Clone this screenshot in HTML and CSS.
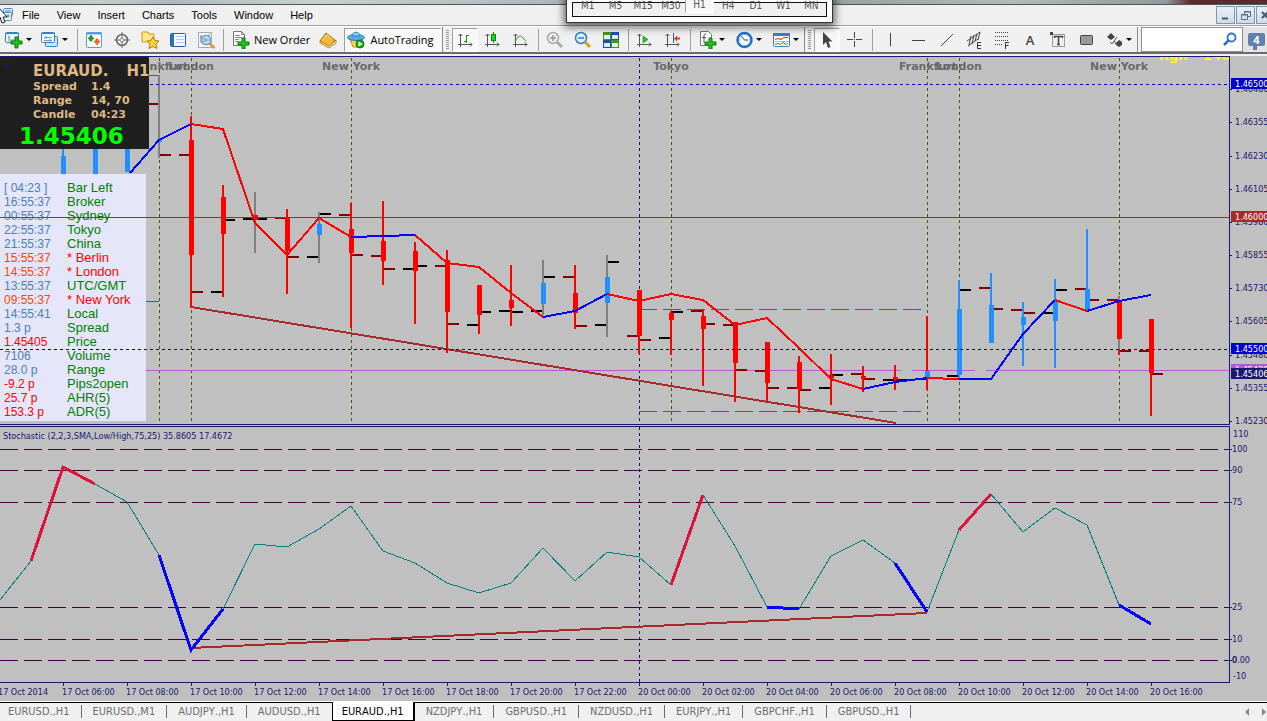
FILE: index.html
```
<!DOCTYPE html>
<html lang="en">
<head>
<meta charset="utf-8">
<title>EURAUD.,H1</title>
<link rel="stylesheet" href="styles.css">
</head>
<body>
<div class="app">
  <div class="titlebar"></div>
  <header class="menubar">
    <svg class="app-icon" width="16" height="18" viewBox="0 0 16 18" aria-hidden="true">
      <rect x="3.5" y="2.5" width="9" height="7" rx="1" fill="#dcebf8" stroke="#4a86c8"/>
      <rect x="0.5" y="6.5" width="11" height="8" rx="1" fill="#eef6fd" stroke="#4a86c8"/>
      <path d="M5 10h5M8 8v4M5 5h6" stroke="#4a86c8" fill="none"/>
      <path d="M-3 0V2L-3 14L0 11L2 17L5 16L3 11H7L-1 2Z" fill="#fff" stroke="#222"/>
    </svg>
    <nav class="menus">
      <button>File</button><button>View</button><button>Insert</button><button>Charts</button><button>Tools</button><button>Window</button><button>Help</button>
    </nav>
    <div class="mdi">
      <button aria-label="Minimize"><svg width="17" height="16"><path d="M5 11.500h6" stroke="#44566c" stroke-width="2"/></svg></button>
      <button aria-label="Restore"><svg width="17" height="16"><path d="M7.500 7V4.500h6v5H11M7 5h7M4.500 7.500h6v5h-6zM4 8h7" fill="none" stroke="#5c6e84"/></svg></button>
      <button aria-label="Close"><svg width="17" height="16"><path d="M5 5l6 6M11 5l-6 6" stroke="#44566c" stroke-width="2"/></svg></button>
    </div>
  </header>

  <div class="toolbar">
    <div class="group">
      <button class="tool drop" aria-label="New chart"><svg width="18" height="18"><rect x="0.5" y="1.500" width="13" height="10" rx="1" fill="#eaf4fc" stroke="#3b7fc4"/><path d="M0 2.500h14" stroke="#3b7fc4"/><path d="M4 5v5M3 6h2M4 9h6" stroke="#6d9cc8" fill="none"/><path d="M10 6h3v4h4v3h-4v4h-3v-4H6v-3h4z" fill="#1fc41f" stroke="#067a06"/></svg><i></i></button>
      <button class="tool drop" aria-label="Profiles"><svg width="18" height="18"><rect x="4.500" y="5.500" width="12" height="10" rx="1" fill="#cfe4f6" stroke="#3b7fc4"/><rect x="0.5" y="1.500" width="13" height="10" rx="1" fill="#f4faff" stroke="#3b7fc4"/><path d="M0 2.500h14" stroke="#3b7fc4"/><path d="M3 6.500h8M3 9.500h8M5 5v3M9 8v3" stroke="#6d9cc8"/></svg><i></i></button>
      <span class="sep"></span>
      <button class="tool" aria-label="Market Watch"><svg width="18" height="18"><rect x="1.500" y="1.500" width="15" height="15" rx="1" fill="#fff" stroke="#5a9ad6"/><path d="M1 2.500h16" stroke="#5a9ad6" stroke-width="2"/><path d="M6 4l3 4H7v2H5V8H3z" fill="#18a818" stroke="#0a6e0a" stroke-width=".6"/><path d="M12 14l3-4h-2V8h-2v2H9z" fill="#ff6a2a" stroke="#c23a08" stroke-width=".6"/></svg></button>
      <button class="tool" aria-label="Crosshair target"><svg width="18" height="18"><circle cx="9" cy="9" r="5.500" fill="none" stroke="#666" stroke-width="1.500"/><path d="M9 1v16M1 9h16" stroke="#666"/><circle cx="9" cy="9" r="2" fill="#eee" stroke="#888"/></svg></button>
      <button class="tool" aria-label="Navigator"><svg width="18" height="18"><path d="M1 3V1h6l1 2h5v8H1z" fill="#ffe78a" stroke="#c99a1e"/><path d="M12 6l2 3.500 4 .5-3 3 1 4.500-4-2-4 2 1-4.500-3-3 4-.5z" fill="#ffd23c" stroke="#b27a0c"/></svg></button>
      <button class="tool" aria-label="Data Window"><svg width="18" height="18"><rect x="1.500" y="2.500" width="15" height="13" rx="1" fill="#f2f9ff" stroke="#1f5fa8"/><rect x="2" y="3" width="3" height="12" fill="#2c6fba"/><path d="M7 5.500h8M7 8.500h8M7 11.500h8" stroke="#a8cbea"/></svg></button>
      <button class="tool" aria-label="Strategy Tester"><svg width="18" height="18"><rect x="1.500" y="1.500" width="13" height="15" fill="#f3f3f3" stroke="#aaa"/><path d="M4 4v8M12 3v8M3 6h3" stroke="#888"/><circle cx="9" cy="9" r="4.500" fill="#cfe6f8" stroke="#6d9fcc" stroke-width="1.500"/><path d="M7 7v4M9 7v4M11 8v2" stroke="#5a8ab5"/><path d="M12.500 12.500l5 4.500" stroke="#d69a28" stroke-width="2.500"/></svg></button>
      <span class="sep"></span>
      <button class="tool order"><svg width="18" height="18"><path d="M1.500 0.500h8l3 3v11h-11z" fill="#fff" stroke="#777"/><path d="M9.500 .5v3h3M3 4.500h5M3 6.500h7M3 8.500h4M3 10.500h3" stroke="#888" fill="none"/><path d="M10 7h3v4h4v3h-4v4h-3v-4H6v-3h4z" fill="#1fc41f" stroke="#067a06"/></svg>New Order</button>
      <button class="tool" aria-label="MetaEditor"><svg width="18" height="18"><path d="M1 10l6-8 9 7-6 7z" fill="#f0b93c" stroke="#a66f10"/><path d="M1 10l9 5 7-6v3l-7 5-9-5z" fill="#ffe6a0" stroke="#a66f10" stroke-width=".8"/><path d="M4 9l4-5 5 4" stroke="#ffe08a" fill="none"/></svg></button>
      <button class="tool auto"><svg width="18" height="18"><path d="M3 8h12l-3 8H6z" fill="#ffd65a" stroke="#c08a1a"/><ellipse cx="9" cy="6.500" rx="8.500" ry="3" fill="#58aee2" stroke="#2f7eb5"/><path d="M5 5c0-5 8-5 8 0z" fill="#8dcdf2" stroke="#2f7eb5"/><circle cx="13" cy="13" r="4" fill="#19b219" stroke="#0a7a0a"/><path d="M11.500 10.500l4 2.500-4 2.500z" fill="#fff"/></svg>AutoTrading</button>
    </div>
    <div class="group">
      <span class="grip"></span>
      <button class="tool pressed" aria-label="Bar chart"><svg width="18" height="18"><path d="M4.500 3v13M2 13.500h14M2.500 5l2-2 2 2M14 11.500l2 2-2 2" stroke="#555" fill="none"/><path d="M10.500 4v8M10 4.500h3M8 10.500h3" stroke="#128a12"/></svg></button>
      <button class="tool" aria-label="Candlesticks"><svg width="18" height="18"><path d="M3.500 3v13M1 13.500h14M1.500 5l2-2 2 2M13 11.500l2 2-2 2" stroke="#555" fill="none"/><path d="M9.500 1v11" stroke="#128a12"/><rect x="7.500" y="3.500" width="4" height="6" fill="#23d323" stroke="#128a12"/></svg></button>
      <button class="tool" aria-label="Line chart"><svg width="18" height="18"><path d="M3.500 3v13M1 13.500h14M1.500 5l2-2 2 2M13 11.500l2 2-2 2" stroke="#555" fill="none"/><path d="M3 11C6 4 9 4 11 7l3 3" stroke="#2a9a2a" fill="none"/></svg></button>
      <span class="sep"></span>
      <button class="tool" aria-label="Zoom in"><svg width="18" height="18"><circle cx="7" cy="7" r="5.500" fill="#eee" stroke="#aaa" stroke-width="1.500"/><path d="M4 7h6M7 4v6" stroke="#999" stroke-width="1.500"/><path d="M11 11l5 5" stroke="#aaa" stroke-width="3"/></svg></button>
      <button class="tool" aria-label="Zoom out"><svg width="18" height="18"><circle cx="7" cy="7" r="5.500" fill="#dff1fd" stroke="#2f7fc4" stroke-width="1.500"/><path d="M4 7h6" stroke="#2f7fc4" stroke-width="1.500"/><path d="M11 11l5 5" stroke="#d69a28" stroke-width="3"/></svg></button>
      <button class="tool" aria-label="Tile windows"><svg width="18" height="18"><path d="M1 1h8v8H1zM9 9h8v8H9z" fill="#3f9a1c"/><path d="M9 1h8v8H9zM1 9h8v8H1z" fill="#1d4fb4"/><path d="M2 4h6v4H2zM10 12h6v4h-6z" fill="#dff5d2"/><path d="M10 4h6v4h-6zM2 12h6v4H2z" fill="#d5e4fb"/><path d="M3 5.500h4M11 5.500h4M3 13.500h4M11 13.500h4" stroke="#fff"/></svg></button>
      <span class="sep"></span>
      <button class="tool" aria-label="Auto scroll"><svg width="18" height="18"><path d="M3.500 3v13M1 13.500h14M1.500 5l2-2 2 2M13 11.500l2 2-2 2" stroke="#555" fill="none"/><path d="M7 5l5 3.500-5 3.500z" fill="#23c323" stroke="#128a12" stroke-width=".6"/></svg></button>
      <button class="tool" aria-label="Chart shift"><svg width="18" height="18"><path d="M3.500 3v13M1 13.500h14M1.500 5l2-2 2 2M13 11.500l2 2-2 2" stroke="#555" fill="none"/><path d="M9.500 2v10" stroke="#1f5fa8"/><path d="M10 7.500l3-3v2h3v2h-3v2z" fill="#d5421c"/></svg></button>
      <span class="sep"></span>
      <button class="tool drop wide" aria-label="Indicators"><svg width="18" height="18"><path d="M1.500 .5h8l3 3v11h-11z" fill="#fff" stroke="#777"/><path d="M7 3C5 3 5 4 5 6v6M3 6.500h4" stroke="#555" fill="none"/><path d="M10 7h3v4h4v3h-4v4h-3v-4H6v-3h4z" fill="#1fc41f" stroke="#067a06"/></svg><i></i></button>
      <button class="tool drop wide" aria-label="Periods"><svg width="18" height="18"><circle cx="8.500" cy="9" r="7" fill="#f4faff" stroke="#1e73c8" stroke-width="2.500"/><path d="M5 5l3.500 4H12" stroke="#444" fill="none"/><path d="M8.500 3v1M8.500 14v1M3 9h1M13 9h1" stroke="#888"/></svg><i></i></button>
      <button class="tool drop wide" aria-label="Templates"><svg width="18" height="18"><rect x=".5" y="2.500" width="16" height="13" rx="1" fill="#fff" stroke="#3b7fc4"/><path d="M0 3.500h17" stroke="#3b7fc4" stroke-width="3"/><path d="M2 8.500l3-1 3 1 3-2h4" stroke="#b2341c" fill="none"/><path d="M2 10.500h14" stroke="#bbb"/><path d="M2 13.500l3-1 2 1 3-2 3 2 2-1" stroke="#1d9a1d" fill="none"/></svg><i></i></button>
    </div>
    <div class="group last-group">
      <span class="grip"></span>
      <button class="tool pressed" aria-label="Cursor"><svg width="18" height="18"><path d="M5 1v13l3-3 2 6 2.500-1-2-5.500h4z" fill="#444"/></svg></button>
      <button class="tool" aria-label="Crosshair"><svg width="18" height="18" shape-rendering="crispEdges"><path d="M8.500 1v6M8.500 10v6M1 8.500h6M10 8.500h6M8 8.500h1" stroke="#444"/></svg></button>
      <span class="sep"></span>
      <button class="tool" aria-label="Vertical line"><svg width="18" height="18" shape-rendering="crispEdges"><path d="M9.500 2v13" stroke="#444"/></svg></button>
      <button class="tool" aria-label="Horizontal line"><svg width="18" height="18" shape-rendering="crispEdges"><path d="M3 9.500h13" stroke="#444"/></svg></button>
      <button class="tool" aria-label="Trendline"><svg width="18" height="18"><path d="M4 15L16 3" stroke="#444"/></svg></button>
      <button class="tool" aria-label="Equidistant channel"><svg width="18" height="18"><path d="M2 10L15 1M3 15L13 8M6 5l-2 9M9 4l-2 9M12 3l-2 7M15 1l-2 8" stroke="#444" fill="none"/><path d="M16 11.500h-3.500v6H16M12.500 14.500H16" stroke="#333" fill="none"/></svg></button>
      <button class="tool" aria-label="Fibonacci retracement"><svg width="18" height="18"><path d="M2 1.500h14M2 5.500h14M2 9.500h14M2 13.500h8" stroke="#444" stroke-dasharray="1 1"/><path d="M12.500 18v-6.500H16M12.500 14.500h3" stroke="#333" fill="none"/></svg></button>
      <button class="tool letter">A</button>
      <button class="tool" aria-label="Text label"><svg width="18" height="18"><rect x="3.500" y="3.500" width="12" height="12" fill="none" stroke="#444" stroke-dasharray="1 1"/><path d="M5.500 7V5.500h8V7M9.500 5v9M8 13.500h3" stroke="#444" stroke-width="1.500" fill="none"/><path d="M1 1h3v3H1z" fill="#444"/></svg></button>
      <button class="tool" aria-label="Rectangle"><svg width="18" height="18"><rect x="3.500" y="4.500" width="12" height="9" rx="1" fill="#999" stroke="#444"/></svg></button>
      <button class="tool drop wide" aria-label="Arrows"><svg width="18" height="18"><path d="M5 2l4 4-4 3-4-3zM13 9l3 2v3l-3 2-4-3z" fill="#444"/><path d="M4 11l2 2 5-7M8 10l4 5" stroke="#555" fill="none"/></svg><i></i></button>
    </div>
    <div class="search">
      <input type="text" aria-label="Search">
      <svg width="16" height="16"><circle cx="9.500" cy="5.500" r="4" fill="#fff" stroke="#2f6fd0" stroke-width="1.800"/><path d="M6.500 8.500L2 13" stroke="#2f6fd0" stroke-width="2.500"/></svg>
    </div>
    <button class="bubble"><span>4</span></button>
  </div>

  <main class="chart">
    <section class="pane price">
      <svg class="plot" id="price"></svg>
      <div class="quote">
        <span class="corner"></span>
        <div class="symbol"><span>EURAUD.</span><span>H1</span></div>
        <div class="stat"><span>Spread</span><span>1.4</span></div>
        <div class="stat"><span>Range</span><span>14, 70</span></div>
        <div class="stat"><span>Candle</span><span>04:23</span></div>
        <div class="last">1.45406</div>
      </div>
      <table class="clocks">
        <tr><td>[ 04:23 ]</td><th>Bar Left</th></tr>
        <tr><td>16:55:37</td><th>Broker</th></tr>
        <tr><td>00:55:37</td><th>Sydney</th></tr>
        <tr><td>22:55:37</td><th>Tokyo</th></tr>
        <tr><td>21:55:37</td><th>China</th></tr>
        <tr class="open"><td>15:55:37</td><th>* Berlin</th></tr>
        <tr class="open"><td>14:55:37</td><th>* London</th></tr>
        <tr><td>13:55:37</td><th>UTC/GMT</th></tr>
        <tr class="open"><td>09:55:37</td><th>* New York</th></tr>
        <tr><td>14:55:41</td><th>Local</th></tr>
        <tr><td>1.3 p</td><th>Spread</th></tr>
        <tr class="alert"><td>1.45405</td><th>Price</th></tr>
        <tr><td>7106</td><th>Volume</th></tr>
        <tr><td>28.0 p</td><th>Range</th></tr>
        <tr class="alert"><td>-9.2 p</td><th>Pips2open</th></tr>
        <tr class="alert"><td>25.7 p</td><th>AHR(5)</th></tr>
        <tr class="alert"><td>153.3 p</td><th>ADR(5)</th></tr>
      </table>
      <svg class="plot levels" id="levels"></svg>
    </section>
    <svg class="axis" id="price-axis"></svg>
    <section class="pane stoch">
      <svg class="plot" id="stoch"></svg>
    </section>
    <svg class="axis" id="stoch-axis"></svg>
    <svg class="times" id="times"></svg>
  </main>

  <footer class="tabs">
    <button>EURUSD.,H1</button><button>EURUSD.,M1</button><button>AUDJPY.,H1</button><button>AUDUSD.,H1</button><button class="active">EURAUD.,H1</button><button>NZDJPY.,H1</button><button>GBPUSD.,H1</button><button>NZDUSD.,H1</button><button>EURJPY.,H1</button><button>GBPCHF.,H1</button><button>GBPUSD.,H1</button>
    <span class="scroll"><svg width="26" height="10"><path d="M8 1v8L4 5zM21 1v8l4-4z" fill="#888"/></svg></span>
  </footer>

  <div class="periods">
    <button>M1</button><button>M5</button><button>M15</button><button>M30</button><button class="on">H1</button><button>H4</button><button>D1</button><button>W1</button><button>MN</button>
  </div>
</div>
<script src="chart.js"></script>
</body>
</html>
```
FILE: styles.css
```
* { box-sizing: border-box; }
body { margin: 0; background: #f0f0f0; font-family: "Open Sans", sans-serif; font-size: 11px; }
button { border: 0; margin: 0; padding: 0; background: none; font: inherit; color: #000; }
svg { display: block; flex: none; overflow: hidden; }
.app { position: relative; display: flex; flex-direction: column; height: 100vh; overflow: hidden; }

.titlebar { height: 5px; flex: none; border-bottom: 1px solid #50565a; background: linear-gradient(90deg, #b4bcbc, #c2cccb 8%, #aeb9bd 13%, #c8cfce 25%, #b0b9bd 42%, #8c9699 60%, #b3b9b6 80%, #8f9a9c 92%, #5c2a2c 94%); }
.menubar { flex: none; display: flex; align-items: center; height: 21px; border-bottom: 1px solid #a0a0a0; background: #f0f0f0; }
.app-icon { margin-right: 6px; }
.menus { display: flex; gap: 17px; flex: 1; font-family: "Liberation Sans", sans-serif; }
.mdi { display: flex; gap: 1px; width: 51px; overflow: hidden; }
.mdi button { flex: none; width: 19px; height: 18px; border: 1px solid #7f96b0; background: linear-gradient(#eaf1f7, #cddae6); }

.toolbar { flex: none; display: flex; height: 28px; border-top: 1px solid #fff; border-bottom: 2px solid #6b6b6b; background: #f0f0f0; }
.group { flex: none; display: flex; align-items: center; border-right: 1px solid #8d8d8d; }
.group:first-child { padding-left: 2px; }
.last-group .sep { width: 7px; }
.tool { flex: none; display: flex; align-items: center; justify-content: center; width: 28px; height: 24px; white-space: nowrap; }
.drop { width: 36px; gap: 3px; justify-content: flex-start; padding-left: 3px; }
.wide { width: 37px; padding-left: 6px; gap: 2px; }
.drop i { border: 3px solid transparent; border-top-color: #000; border-bottom: 0; }
.order { width: 88px; gap: 4px; justify-content: flex-start; padding-left: 6px; }
.auto { width: 97px; gap: 5px; margin: 0 1px 0 2px; padding-right: 4px; }
.auto, .pressed { border: 1px solid #fff; border-top-color: #a0a0a0; border-left-color: #a0a0a0; background: #f8f8f8; }
.pressed { width: 26px; margin: 0 1px; }
.letter { font-size: 13px; font-weight: 600; color: #444; }
.sep { width: 6px; height: 22px; background: linear-gradient(#a0a0a0, #a0a0a0) 3px 0 / 1px 100% no-repeat; }
.grip { width: 8px; height: 20px; background: repeating-linear-gradient(#999 0 1px, #f0f0f0 1px 2px) 3px 0 / 3px 100% no-repeat; }
.search { flex: 1; min-width: 0; display: flex; align-items: center; margin-left: 3px; padding-right: 4px; border: 1px solid #8d8d8d; background: #fff; }
.search input { flex: 1; width: 0; min-width: 0; height: 20px; padding: 0; border: 0; background: none; }
.bubble { flex: none; width: 24px; padding: 0 2px 0 5px; background: #e4e4e4; }
.bubble span { position: relative; display: block; height: 13px; line-height: 13px; border-radius: 2px; background: #6280ae; color: #fff; font-weight: 700; }
.bubble span::after { content: ""; position: absolute; left: 5px; top: 13px; border: 4px solid transparent; border-top-color: #6280ae; border-right-color: #6280ae; border-bottom: 0; border-left: 0; }

.chart { flex: 1; min-height: 0; display: grid; grid-template: 370px 257px 1fr / 1fr 37px; margin-top: 2px; background: #c0c0c0; font-family: "DejaVu Sans Condensed", "DejaVu Sans", sans-serif; font-size: 9px; font-kerning: none; }
.pane { position: relative; min-width: 0; overflow: hidden; border: solid #191970; border-width: 1px 1px 1px 0; }
.price { margin-bottom: 1px; }
.plot { width: 100%; height: 100%; }
.levels { position: absolute; inset: 0; pointer-events: none; }
.axis, .times { width: 100%; height: 100%; }
.times { grid-column: 1 / 3; }
.session { font: bold 11px "DejaVu Sans", sans-serif; fill: #696969; text-anchor: middle; }
.notice { font: bold 13px "DejaVu Sans", sans-serif; fill: #ff0; }
.ink { fill: #191970; }
.lit { fill: #fff; }

.quote { position: absolute; top: 0; left: 0; width: 149px; height: 92px; padding: 6px 0 0 33px; overflow: hidden; background: #1f1f1f; color: #deb887; font: bold 11px/14px "DejaVu Sans", sans-serif; }
.quote .symbol { display: flex; gap: 18px; font-size: 15px; line-height: 17px; }
.stat { display: flex; }
.stat span:first-child { width: 58px; }
.last { margin-left: -14px; font-size: 23px; line-height: 28px; color: #0f0; }
.corner { position: absolute; left: 2px; top: 6px; border: 4px solid transparent; border-top-color: #191970; border-bottom: 0; }

.clocks { position: absolute; top: 117px; left: 0; width: 146px; padding: 7px 0 2px 4px; border-spacing: 0; table-layout: fixed; background: #e6e6fa; font: 12px/14px "Liberation Sans", sans-serif; }
.clocks tr { height: 14px; }
.clocks td, .clocks th { padding: 0; color: #4682b4; white-space: nowrap; }
.clocks td { width: 63px; }
.clocks th { font-weight: normal; font-size: 13px; text-align: left; color: #008000; }
.clocks .open td { color: #ff4500; }
.clocks .open th, .clocks .alert td { color: #f00; }

.tabs { flex: none; display: flex; align-items: center; height: 20px; border-top: 1px solid #fff; background: linear-gradient(#000, #000) 0 0 / 100% 1px no-repeat #f0f0f0; font-family: "DejaVu Sans Condensed", "DejaVu Sans", sans-serif; font-kerning: none; }
.tabs button { padding: 0 11px; line-height: 13px; color: #6d6d6d; border-right: 1px solid #6d6d6d; white-space: nowrap; }
.tabs button:first-child { padding-left: 8px; }
.tabs button:nth-child(4) { border-right: 0; }
.tabs .active { align-self: stretch; padding: 0 9px; border: solid #000; border-width: 0 2px 1px 1px; background: #fff; color: #000; }
.scroll { margin-left: auto; }

.periods { position: absolute; top: -4px; left: 566px; display: flex; width: 267px; height: 27px; padding: 0 7px; border: 1px solid #333; background: #f0f0f0; box-shadow: 0 2px 8px 2px rgba(0, 0, 0, .6), inset 0 0 0 5px #fff, inset 0 0 0 6px #111; font: 10px "DejaVu Sans Condensed", "DejaVu Sans", sans-serif; }
.periods button { flex: 1 1 0; height: 16px; color: #555; }
.periods .on { border: 1px solid #fff; border-top: 0; border-left-color: #a0a0a0; background: #f8f8f8; }
```
FILE: chart.js
```
const R = '#ff0000', B = '#1e90ff', G = '#808080', K = '#000000', D = '#800000';
// x, wick colour, wick top, wick bottom, body colour, body top, body bottom, open, close, tick colours
const candles = [
  [63, B, 140, 174, B, 156, 176, 0, 0], [95, B, 140, 174, B, 149, 176, 0, 0], [127, B, 140, 172, B, 149, 172, 0, 0],
  [159, G, 75, 158, B, 139, 142, 104, 155, D, D], [191, R, 116, 308, R, 140, 255, 155, 292, D, D],
  [223, R, 185, 297, R, 197, 234, 292, 220, K, K], [255, G, 192, 253, R, 215, 220, 219, 219, K, K],
  [287, R, 209, 294, R, 217, 251, 218, 257, D, D], [319, G, 212, 263, B, 224, 235, 257, 214, K, K],
  [351, R, 203, 328, R, 229, 253, 215, 255, D, D], [383, R, 201, 285, R, 241, 261, 256, 269, D, D],
  [415, R, 242, 324, R, 251, 271, 269, 266, K, K], [447, R, 250, 353, R, 260, 312, 266, 324, D, D],
  [479, R, 285, 334, R, 285, 315, 325, 312, K, K], [511, R, 265, 326, R, 300, 308, 311, 312, K, K],
  [543, G, 260, 315, B, 283, 304, 311, 277, K, K], [575, R, 265, 329, R, 293, 313, 277, 326, D, D],
  [607, G, 255, 337, B, 277, 303, 325, 262, K, K], [639, R, 290, 354, R, 290, 336, 336, 340, D, D],
  [671, R, 311, 355, R, 313, 320, 338, 312, K, K], [703, R, 309, 386, R, 316, 329, 311, 324, D, D],
  [735, R, 322, 402, R, 322, 363, 325, 370, D, D], [767, R, 342, 402, R, 342, 383, 371, 388, D, D],
  [799, R, 356, 413, R, 362, 389, 388, 390, D, D], [831, R, 354, 405, R, 375, 378, 388, 375, K, K],
  [863, R, 366, 392, R, 376, 379, 374, 379, D, D], [895, R, 365, 390, R, 377, 380, 380, 380, K, K],
  [927, R, 316, 390, B, 371, 379, 379, 0, K, K], [959, B, 280, 379, B, 309, 375, 376, 290, K, K],
  [991, B, 273, 343, B, 305, 343, 288, 309, D, D], [1023, B, 302, 366, B, 317, 325, 310, 313, D, D],
  [1055, B, 279, 368, B, 300, 321, 313, 290, K, K], [1087, B, 229, 311, B, 289, 311, 289, 300, D, D],
  [1119, G, 296, 349, R, 300, 339, 300, 351, D, D], [1151, R, 319, 416, R, 319, 373, 351, 374, D, D]
];
const line = (x1, y1, x2, y2, color, extra = '') =>
  `<line x1="${x1}" y1="${y1}" x2="${x2}" y2="${y2}" stroke="${color}" ${extra}/>`;
const rect = (x, y, w, h, color) => `<rect x="${x}" y="${y}" width="${w}" height="${h}" fill="${color}"/>`;
const poly = (points, color, width) =>
  `<polyline points="${points}" fill="none" stroke="${color}" stroke-width="${width}"/>`;
const text = (x, y, label, cls) => `<text x="${x}" y="${y}" class="${cls}">${label}</text>`;
const draw = (id, top, body) => {
  document.getElementById(id).innerHTML = `<g shape-rendering="crispEdges" transform="translate(0 ${-top})">${body}</g>`;
};
const dash = n => `stroke-dasharray="${n}"`;

let s = [159, 191, 351, 671, 927, 959, 1119].map(x => line(x + .5, 58, x + .5, 424, '#555500', dash('3 3'))).join('');
s += line(639.5, 58, 639.5, 424, '#191970', dash('3 3'));
s += line(146, 75.5, 159, 75.5, '#008080') + line(146, 301.5, 159, 301.5, '#008080');
s += line(639, 309.5, 921, 309.5, '#008080', dash('18 6')) + line(639, 411.5, 921, 411.5, '#008080', dash('18 6'));
s += line(146, 370.5, 901, 370.5, '#ba55d3') + line(912, 370.5, 975, 370.5, '#ba55d3') + line(986, 370.5, '100%', 370.5, '#ba55d3');
for (const [x, wc, t, b, bc, bt, bb, o, c, oc, cc] of candles) {
  if (o) s += rect(x - 12, o - 1, 11, 2, oc);
  if (c) s += rect(x + 1, c - 1, 11, 2, cc);
  s += rect(x - 1, t, 2, b - t, wc) + rect(x - 2, bt, 5, bb - bt, bc);
}
s += rect(1118, 349, 2, 6, R);
s += poly('130,173 159,140 191,124', '#0000ff', 2);
s += poly('191,124 223,129 255,223 287,255 319,218 351,237', R, 2);
s += poly('351,237 383,236 415,235', '#0000ff', 2);
s += poly('415,235 447,263 479,267 511,293 543,317', R, 2);
s += poly('543,317 575,311 607,294', '#0000ff', 2);
s += poly('607,294 639,301 671,294 703,300 735,325 767,318 799,348 831,379 863,389', R, 2);
s += poly('863,389 895,382 927,378', '#0000ff', 2) + poly('927,378 959,379', R, 2);
s += poly('959,379 991,379 1023,334 1055,300', '#0000ff', 2) + poly('1055,300 1087,311', R, 2);
s += poly('1087,311 1119,301 1151,295', '#0000ff', 2) + poly('191,307 896,423', '#a52a2a', 2);
for (const [x, name] of [[159, 'Frankfurt'], [191, 'London'], [351, 'New York'], [671, 'Tokyo'], [928, 'Frankfurt'], [959, 'London'], [1119, 'New York']])
  s += text(x, 70, name, 'session');
s += text(1159, 60, 'Rgn', 'notice') + text(1203, 60, '146', 'notice');
draw('price', 57, s);

draw('levels', 57, line(150, 84.5, '100%', 84.5, '#0000cd', dash('3 3')) + line(0, 217.5, '100%', 217.5, '#a52a2a')
  + line(0, 349.5, '100%', 349.5, '#00009c', dash('3 3')));

let a = '';
for (const [y, label] of [[89, '1.46480'], [122, '1.46355'], [156, '1.46230'], [189, '1.46105'], [222, '1.45980'], [255, '1.45855'],
  [288, '1.45730'], [321, '1.45605'], [355, '1.45480'], [388, '1.45355'], [421, '1.45230']])
  a += line(0, y + .5, 2, y + .5, '#191970') + text(5, y + 3, label, 'ink');
for (const [y, h, label, color] of [[78, 11, '1.46500', '#0000cd'], [211, 11, '1.46000', '#a52a2a'], [343, 11, '1.45500', '#0000cd'],
  [364, 11, '1.45420', '#ba55d3'], [368, 11, '1.45406', '#191970']])
  a += rect(1, y, '100%', h, color) + text(5, y + 9, label, 'lit');
draw('price-axis', 56, a);

let t = [449, 470, 502, 607, 639, 660].map(y => line(0, y + .5, '100%', y + .5, '#400040', dash('18 6'))).join('');
t += line(639.5, 427, 639.5, 682, '#191970', dash('3 3'));
t += poly('0,600 31,561 63,467 95,484 127,502 159,555 191,650 223,609 255,544 287,547 319,529 351,506 383,551 415,563 447,583 479,593 511,583 543,548 575,581 607,552 639,557 671,585 703,495 735,546 767,607 799,609 831,556 863,540 895,563 927,612 959,530 991,494 1023,532 1055,508 1087,525 1119,605 1151,624', '#008080', 1);
t += poly('191,648 927,613', '#a52a2a', 2);
for (const p of ['31,561 63,467 95,484', '671,585 703,495', '959,530 991,494']) t += poly(p, '#dc143c', 3);
for (const p of ['159,555 191,650 223,609', '767,607 799,609', '895,563 927,612', '1119,605 1151,624']) t += poly(p, '#0000ff', 3);
t += text(3, 439, 'Stochastic (2,2,3,SMA,Low/High,75,25) 35.8605 17.4672', 'ink');
draw('stoch', 427, t);

let v = text(3, 437, '110', 'ink') + text(2, 663, '0', 'ink') + text(3, 679, '-10', 'ink');
for (const [y, label] of [[449, '100'], [470, '90'], [502, '75'], [607, '25'], [639, '10'], [660, '0.00']])
  v += line(0, y + .5, 2, y + .5, '#191970') + text(2, y + 3, label, 'ink');
draw('stoch-axis', 426, v);

let w = text(-2, 695, '17 Oct 2014', 'ink');
for (let i = 0; i < 18; i++) {
  const x = 63 + i * 64, hour = (6 + i * 2) % 24;
  const label = `${i < 9 ? 17 : 20} Oct ${String(hour).padStart(2, '0')}:00`;
  w += line(x + .5, 682, x + .5, 686, '#191970') + text(x - 1, 695, label, 'ink');
}
draw('times', 683, w);
```
